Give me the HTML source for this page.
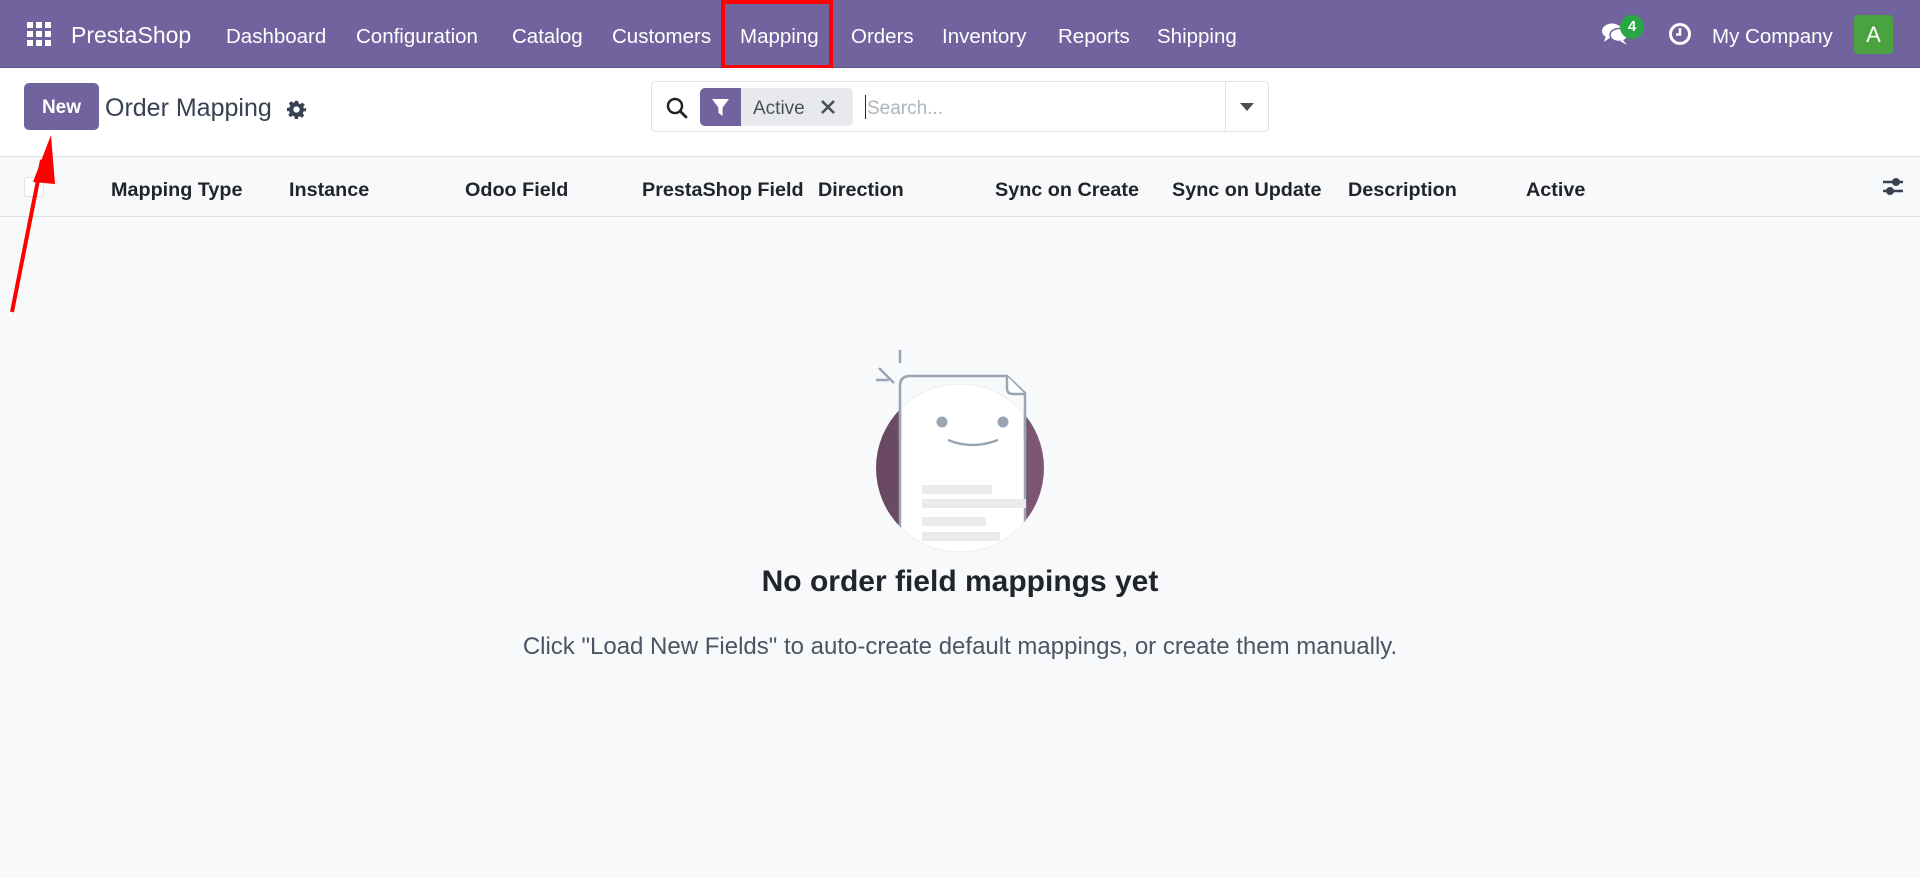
<!DOCTYPE html>
<html><head><meta charset="utf-8"><style>
*{margin:0;padding:0;box-sizing:border-box}
body{width:1920px;height:878px;overflow:hidden;background:#f8f9fa;font-family:"Liberation Sans",sans-serif;position:relative;color:#212529}
.nav{position:absolute;left:0;top:0;width:1920px;height:68px;background:#71639e;border-bottom:1px solid #5e5288}
.nav span{position:absolute;top:25px;font-size:20.5px;color:#fff;white-space:nowrap}
.cp{position:absolute;left:0;top:68px;width:1920px;height:89px;background:#fff;border-bottom:1px solid #dee2e6}
.hdr{position:absolute;left:0;top:157px;width:1920px;height:60px;border-bottom:1px solid #dee2e6;background:#f8f9fa}
.hdr span{position:absolute;top:22px;font-size:19.8px;font-weight:bold;color:#212529;white-space:nowrap}
.abs{position:absolute}
</style></head><body>
<div class="nav">
<svg class="abs" style="left:27px;top:22px" width="24" height="24" viewBox="0 0 24 24" fill="#fff"><rect x="0" y="0" width="6" height="6"/><rect x="9" y="0" width="6" height="6"/><rect x="18" y="0" width="6" height="6"/><rect x="0" y="9" width="6" height="6"/><rect x="9" y="9" width="6" height="6"/><rect x="18" y="9" width="6" height="6"/><rect x="0" y="18" width="6" height="6"/><rect x="9" y="18" width="6" height="6"/><rect x="18" y="18" width="6" height="6"/></svg>
<span style="left:71px;top:22px;font-size:23px">PrestaShop</span>
<span style="left:226px">Dashboard</span>
<span style="left:356px">Configuration</span>
<span style="left:512px">Catalog</span>
<span style="left:612px">Customers</span>
<span style="left:740px">Mapping</span>
<span style="left:851px">Orders</span>
<span style="left:942px">Inventory</span>
<span style="left:1058px">Reports</span>
<span style="left:1157px">Shipping</span>
<div class="abs" style="left:721px;top:0;width:112px;height:69px;border:4px solid #f00"></div>
<svg class="abs" style="left:1601px;top:21px" width="30" height="26" viewBox="0 0 30 26" fill="#fff"><ellipse cx="11" cy="10" rx="10" ry="7.5"/><path d="M5 15 L3 21 L10 16Z"/><ellipse cx="18" cy="14" rx="9" ry="6.5" fill="#fff" stroke="#71639e" stroke-width="1.5"/><path d="M22 19 L26 24 L19 20Z"/></svg>
<div class="abs" style="left:1620px;top:15px;width:24px;height:24px;border-radius:12px;background:#28a745;color:#fff;font-size:15px;font-weight:bold;text-align:center;line-height:24px">4</div>
<svg class="abs" style="left:1668px;top:22px" width="24" height="24" viewBox="0 0 24 24"><circle cx="12" cy="12" r="9.5" fill="none" stroke="#fff" stroke-width="3"/><path d="M12 6v6.5H8" fill="none" stroke="#fff" stroke-width="2.5"/></svg>
<span style="left:1712px">My Company</span>
<div class="abs" style="left:1854px;top:15px;width:39px;height:39px;border-radius:4px;background:#4aa33f;color:#fff;font-size:22px;text-align:center;line-height:39px">A</div>
</div>
<div class="cp">
<div class="abs" style="left:24px;top:15px;width:75px;height:47px;background:#71639e;border-radius:5px;color:#fff;font-weight:bold;font-size:19px;text-align:center;line-height:49px">New</div>
<div class="abs" style="left:105px;top:26px;font-size:25px;color:#374151">Order Mapping</div>
<svg class="abs" style="left:287px;top:32px" width="19" height="19" viewBox="0 0 24 24" fill="#374151"><path d="M10 1h4l.6 3.2 2.3 1 2.7-1.9 2.8 2.8-1.9 2.7 1 2.3L24 10v4l-3.2.6-1 2.3 1.9 2.7-2.8 2.8-2.7-1.9-2.3 1L14 24h-4l-.6-3.2-2.3-1-2.7 1.9-2.8-2.8 1.9-2.7-1-2.3L0 14v-4l3.2-.6 1-2.3-1.9-2.7 2.8-2.8 2.7 1.9 2.3-1z"/><circle cx="12" cy="12" r="4" fill="#fff"/></svg>
<div class="abs" style="left:651px;top:13px;width:618px;height:51px;border:1px solid #dee2e6;border-radius:5px;background:#fff"></div>
<svg class="abs" style="left:665px;top:28px" width="24" height="24" viewBox="0 0 24 24"><circle cx="10" cy="10" r="7" fill="none" stroke="#212529" stroke-width="2.5"/><path d="M15 15l6 6" stroke="#212529" stroke-width="2.8" stroke-linecap="round"/></svg>
<div class="abs" style="left:700px;top:20px;width:153px;height:38px;border-radius:5px;background:#e7e9ed"></div>
<div class="abs" style="left:700px;top:20px;width:41px;height:38px;border-radius:5px 0 0 5px;background:#71639e"></div>
<svg class="abs" style="left:712px;top:31px" width="17" height="17" viewBox="0 0 16 16" fill="#fff"><path d="M0 0h16L10 8v8L6 13V8z"/></svg>
<div class="abs" style="left:753px;top:30px;font-size:19px;color:#495057">Active</div>
<svg class="abs" style="left:820px;top:31px" width="16" height="16" viewBox="0 0 16 16"><path d="M2 2l12 12M14 2L2 14" stroke="#495057" stroke-width="2.6"/></svg>
<div class="abs" style="left:865px;top:27px;width:1px;height:24px;background:#212529"></div>
<div class="abs" style="left:867px;top:30px;font-size:19px;color:#adb5bd">Search...</div>
<div class="abs" style="left:1225px;top:14px;width:1px;height:49px;background:#dee2e6"></div>
<svg class="abs" style="left:1240px;top:35px" width="14" height="9" viewBox="0 0 14 9"><path d="M0 0h14L7 8z" fill="#495057"/></svg>
</div>
<div class="hdr">
<div class="abs" style="left:24px;top:20px;width:20px;height:20px;border:1px solid #dee2e6;border-radius:3px;background:#fff"></div>
<span style="left:111px">Mapping Type</span>
<span style="left:289px">Instance</span>
<span style="left:465px">Odoo Field</span>
<span style="left:642px">PrestaShop Field</span>
<span style="left:818px">Direction</span>
<span style="left:995px">Sync on Create</span>
<span style="left:1172px">Sync on Update</span>
<span style="left:1348px">Description</span>
<span style="left:1526px">Active</span>
<svg class="abs" style="left:1881px;top:19px" width="24" height="22" viewBox="0 0 24 22"><path d="M2 6h20M2 15h20" stroke="#374151" stroke-width="2.5"/><circle cx="15" cy="6" r="4" fill="#374151"/><circle cx="9" cy="15" r="4" fill="#374151"/></svg>
</div>
<svg class="abs" style="left:0;top:120px" width="70" height="200" viewBox="0 0 70 200"><path d="M12 192 L42 40" stroke="#f00" stroke-width="4"/><path d="M51 15 L33 62 L55 64Z" fill="#f00"/></svg>
<svg class="abs" style="left:860px;top:345px" width="200" height="210" viewBox="0 0 200 210">
<defs><linearGradient id="g" x1="0" x2="1"><stop offset="0" stop-color="#694861"/><stop offset="1" stop-color="#7d5674"/></linearGradient><clipPath id="c"><circle cx="100" cy="123" r="84"/></clipPath></defs>
<circle cx="100" cy="123" r="84" fill="url(#g)"/>
<g clip-path="url(#c)"><path d="M40 41 Q40 31 50 31 H147 L165 48 V215 H40 Z" fill="#fff" stroke="#9aa5b4" stroke-width="2.5"/></g>
<path d="M40 95 V41 Q40 31 50 31 H147 L165 48 V95" fill="none" stroke="#9aa5b4" stroke-width="2.5"/>
<path d="M147 31 V43 Q147 49 153 49 H165" fill="#fff" stroke="#9aa5b4" stroke-width="2.5"/>
<path d="M19 23 L34 38 M16 35 H29 M40 5 V18" stroke="#9aa5b4" stroke-width="2.5"/>
<circle cx="82" cy="77" r="5.5" fill="#9aa5b4"/><circle cx="143" cy="77" r="5.5" fill="#9aa5b4"/>
<path d="M88 95 Q112 105 138 95" fill="none" stroke="#9aa5b4" stroke-width="2.5"/>
<g fill="#ebebeb" clip-path="url(#c)"><rect x="62" y="140" width="70" height="9"/><rect x="62" y="154" width="104" height="9"/><rect x="62" y="172" width="64" height="9"/><rect x="62" y="187" width="78" height="9"/></g>
</svg>
<div class="abs" style="left:0;top:565px;width:1920px;text-align:center;font-size:30px;font-weight:bold;color:#212529">No order field mappings yet</div>
<div class="abs" style="left:0;top:633px;width:1920px;text-align:center;font-size:24px;color:#4b5563">Click "Load New Fields" to auto-create default mappings, or create them manually.</div>
</body></html>
